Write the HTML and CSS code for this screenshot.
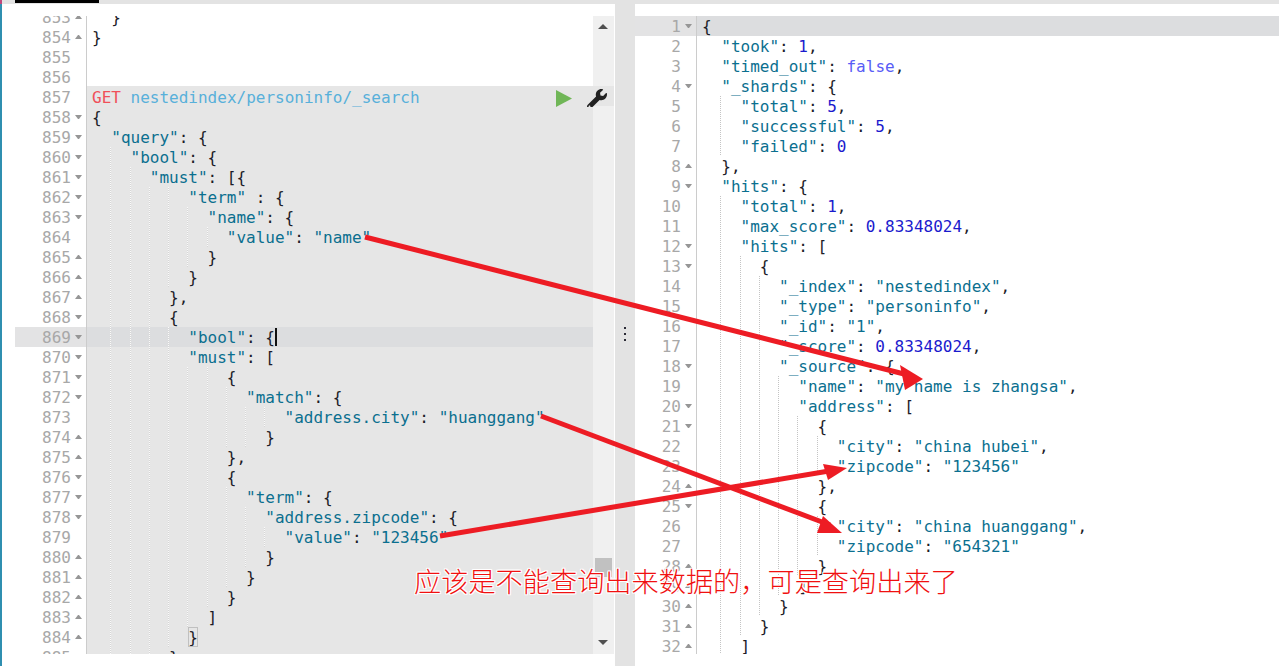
FILE: index.html
```html
<!DOCTYPE html>
<html lang="zh">
<head>
<meta charset="utf-8">
<title>Sense</title>
<link rel="stylesheet" href="styles.css">
</head>
<body>
<div class="rail"></div>
<div class="app">
  <div class="top"><div class="tab"></div></div>
  <div class="main">
    <section class="pane left">
      <div class="editor">
        <div class="lines">
          <div class="r"><span class="g">853<i class="f u"></i></span><span class="c"><i class="y"></i>}</span></div>
          <div class="r"><span class="g">854<i class="f u"></i></span><span class="c">}</span></div>
          <div class="r"><span class="g">855<i class="f"></i></span><span class="c"></span></div>
          <div class="r"><span class="g">856<i class="f"></i></span><span class="c"></span></div>
          <div class="r rq first"><span class="g">857<i class="f"></i></span><span class="c"><b class="m">GET</b> <b class="url">nestedindex/personinfo/_search</b></span>
            <svg class="play" viewBox="0 0 16 17"><path d="M0 0L16 8.5L0 17Z"/></svg>
            <svg class="wrench" viewBox="0 0 512 512"><path d="M507.73 109.1c-2.24-9.03-13.54-12.09-20.12-5.51l-74.36 74.36-67.88-11.31-11.31-67.88 74.36-74.36c6.62-6.62 3.43-17.9-5.66-20.16-47.38-11.74-99.55.91-136.58 37.93-39.64 39.64-50.55 97.1-34.05 147.2L18.74 402.76c-24.99 24.99-24.99 65.51 0 90.5 24.99 24.99 65.51 24.99 90.5 0l213.21-213.21c50.12 16.71 107.47 5.68 147.37-34.22 37.07-37.07 49.7-89.32 37.91-136.73zM64 472c-13.25 0-24-10.75-24-24 0-13.26 10.75-24 24-24s24 10.74 24 24c0 13.25-10.75 24-24 24z"/></svg>
          </div>
          <div class="r rq"><span class="g">858<i class="f d"></i></span><span class="c">{</span></div>
          <div class="r rq"><span class="g">859<i class="f d"></i></span><span class="c"><i class="y"></i><b class="s">"query"</b>: {</span></div>
          <div class="r rq"><span class="g">860<i class="f d"></i></span><span class="c"><i class="x"></i><i class="y"></i><b class="s">"bool"</b>: {</span></div>
          <div class="r rq"><span class="g">861<i class="f d"></i></span><span class="c"><i class="x"></i><i class="x"></i><i class="y"></i><b class="s">"must"</b>: [{</span></div>
          <div class="r rq"><span class="g">862<i class="f d"></i></span><span class="c"><i class="x"></i><i class="x"></i><i class="x"></i><i class="x"></i><i class="y"></i><b class="s">"term"</b> : {</span></div>
          <div class="r rq"><span class="g">863<i class="f d"></i></span><span class="c"><i class="x"></i><i class="x"></i><i class="x"></i><i class="x"></i><i class="x"></i><i class="y"></i><b class="s">"name"</b>: {</span></div>
          <div class="r rq"><span class="g">864<i class="f"></i></span><span class="c"><i class="x"></i><i class="x"></i><i class="x"></i><i class="x"></i><i class="x"></i><i class="x"></i><i class="y"></i><b class="s">"value"</b>: <b class="s">"name"</b></span></div>
          <div class="r rq"><span class="g">865<i class="f u"></i></span><span class="c"><i class="x"></i><i class="x"></i><i class="x"></i><i class="x"></i><i class="x"></i><i class="y"></i>}</span></div>
          <div class="r rq"><span class="g">866<i class="f u"></i></span><span class="c"><i class="x"></i><i class="x"></i><i class="x"></i><i class="x"></i><i class="y"></i>}</span></div>
          <div class="r rq"><span class="g">867<i class="f u"></i></span><span class="c"><i class="x"></i><i class="x"></i><i class="x"></i><i class="y"></i>},</span></div>
          <div class="r rq"><span class="g">868<i class="f d"></i></span><span class="c"><i class="x"></i><i class="x"></i><i class="x"></i><i class="y"></i>{</span></div>
          <div class="r rq cur"><span class="g">869<i class="f d"></i></span><span class="c"><i class="x"></i><i class="x"></i><i class="x"></i><i class="x"></i><i class="y"></i><b class="s">"bool"</b>: {<i class="caret"></i></span></div>
          <div class="r rq"><span class="g">870<i class="f d"></i></span><span class="c"><i class="x"></i><i class="x"></i><i class="x"></i><i class="x"></i><i class="y"></i><b class="s">"must"</b>: [</span></div>
          <div class="r rq"><span class="g">871<i class="f d"></i></span><span class="c"><i class="x"></i><i class="x"></i><i class="x"></i><i class="x"></i><i class="x"></i><i class="x"></i><i class="y"></i>{</span></div>
          <div class="r rq"><span class="g">872<i class="f d"></i></span><span class="c"><i class="x"></i><i class="x"></i><i class="x"></i><i class="x"></i><i class="x"></i><i class="x"></i><i class="x"></i><i class="y"></i><b class="s">"match"</b>: {</span></div>
          <div class="r rq"><span class="g">873<i class="f"></i></span><span class="c"><i class="x"></i><i class="x"></i><i class="x"></i><i class="x"></i><i class="x"></i><i class="x"></i><i class="x"></i><i class="x"></i><i class="x"></i><i class="y"></i><b class="s">"address.city"</b>: <b class="s">"huanggang"</b></span></div>
          <div class="r rq"><span class="g">874<i class="f u"></i></span><span class="c"><i class="x"></i><i class="x"></i><i class="x"></i><i class="x"></i><i class="x"></i><i class="x"></i><i class="x"></i><i class="x"></i><i class="y"></i>}</span></div>
          <div class="r rq"><span class="g">875<i class="f u"></i></span><span class="c"><i class="x"></i><i class="x"></i><i class="x"></i><i class="x"></i><i class="x"></i><i class="x"></i><i class="y"></i>},</span></div>
          <div class="r rq"><span class="g">876<i class="f d"></i></span><span class="c"><i class="x"></i><i class="x"></i><i class="x"></i><i class="x"></i><i class="x"></i><i class="x"></i><i class="y"></i>{</span></div>
          <div class="r rq"><span class="g">877<i class="f d"></i></span><span class="c"><i class="x"></i><i class="x"></i><i class="x"></i><i class="x"></i><i class="x"></i><i class="x"></i><i class="x"></i><i class="y"></i><b class="s">"term"</b>: {</span></div>
          <div class="r rq"><span class="g">878<i class="f d"></i></span><span class="c"><i class="x"></i><i class="x"></i><i class="x"></i><i class="x"></i><i class="x"></i><i class="x"></i><i class="x"></i><i class="x"></i><i class="y"></i><b class="s">"address.zipcode"</b>: {</span></div>
          <div class="r rq"><span class="g">879<i class="f"></i></span><span class="c"><i class="x"></i><i class="x"></i><i class="x"></i><i class="x"></i><i class="x"></i><i class="x"></i><i class="x"></i><i class="x"></i><i class="x"></i><i class="y"></i><b class="s">"value"</b>: <b class="s">"123456"</b></span></div>
          <div class="r rq"><span class="g">880<i class="f u"></i></span><span class="c"><i class="x"></i><i class="x"></i><i class="x"></i><i class="x"></i><i class="x"></i><i class="x"></i><i class="x"></i><i class="x"></i><i class="y"></i>}</span></div>
          <div class="r rq"><span class="g">881<i class="f u"></i></span><span class="c"><i class="x"></i><i class="x"></i><i class="x"></i><i class="x"></i><i class="x"></i><i class="x"></i><i class="x"></i><i class="y"></i>}</span></div>
          <div class="r rq"><span class="g">882<i class="f u"></i></span><span class="c"><i class="x"></i><i class="x"></i><i class="x"></i><i class="x"></i><i class="x"></i><i class="x"></i><i class="y"></i>}</span></div>
          <div class="r rq"><span class="g">883<i class="f u"></i></span><span class="c"><i class="x"></i><i class="x"></i><i class="x"></i><i class="x"></i><i class="x"></i><i class="y"></i>]</span></div>
          <div class="r rq"><span class="g">884<i class="f u"></i></span><span class="c"><i class="x"></i><i class="x"></i><i class="x"></i><i class="x"></i><i class="y"></i><span class="bm">}</span></span></div>
          <div class="r rq"><span class="g">885<i class="f u"></i></span><span class="c"><i class="x"></i><i class="x"></i><i class="x"></i><i class="y"></i>}</span></div>
        </div>
        <div class="sbar">
          <i class="arr up"></i>
          <i class="thumb"></i>
          <i class="arr down"></i>
        </div>
      </div>
    </section>
    <div class="split"><span class="dots"><i></i><i></i><i></i></span></div>
    <section class="pane right">
      <div class="editor out">
        <div class="lines">
          <div class="r cur"><span class="g">1<i class="f d"></i></span><span class="c">{</span></div>
          <div class="r"><span class="g">2<i class="f"></i></span><span class="c"><i class="y"></i><b class="s">"took"</b>: <b class="n">1</b>,</span></div>
          <div class="r"><span class="g">3<i class="f"></i></span><span class="c"><i class="y"></i><b class="s">"timed_out"</b>: <b class="bo">false</b>,</span></div>
          <div class="r"><span class="g">4<i class="f d"></i></span><span class="c"><i class="y"></i><b class="s">"_shards"</b>: {</span></div>
          <div class="r"><span class="g">5<i class="f"></i></span><span class="c"><i class="x"></i><i class="y"></i><b class="s">"total"</b>: <b class="n">5</b>,</span></div>
          <div class="r"><span class="g">6<i class="f"></i></span><span class="c"><i class="x"></i><i class="y"></i><b class="s">"successful"</b>: <b class="n">5</b>,</span></div>
          <div class="r"><span class="g">7<i class="f"></i></span><span class="c"><i class="x"></i><i class="y"></i><b class="s">"failed"</b>: <b class="n">0</b></span></div>
          <div class="r"><span class="g">8<i class="f u"></i></span><span class="c"><i class="y"></i>},</span></div>
          <div class="r"><span class="g">9<i class="f d"></i></span><span class="c"><i class="y"></i><b class="s">"hits"</b>: {</span></div>
          <div class="r"><span class="g">10<i class="f"></i></span><span class="c"><i class="x"></i><i class="y"></i><b class="s">"total"</b>: <b class="n">1</b>,</span></div>
          <div class="r"><span class="g">11<i class="f"></i></span><span class="c"><i class="x"></i><i class="y"></i><b class="s">"max_score"</b>: <b class="n">0.83348024</b>,</span></div>
          <div class="r"><span class="g">12<i class="f d"></i></span><span class="c"><i class="x"></i><i class="y"></i><b class="s">"hits"</b>: [</span></div>
          <div class="r"><span class="g">13<i class="f d"></i></span><span class="c"><i class="x"></i><i class="x"></i><i class="y"></i>{</span></div>
          <div class="r"><span class="g">14<i class="f"></i></span><span class="c"><i class="x"></i><i class="x"></i><i class="x"></i><i class="y"></i><b class="s">"_index"</b>: <b class="s">"nestedindex"</b>,</span></div>
          <div class="r"><span class="g">15<i class="f"></i></span><span class="c"><i class="x"></i><i class="x"></i><i class="x"></i><i class="y"></i><b class="s">"_type"</b>: <b class="s">"personinfo"</b>,</span></div>
          <div class="r"><span class="g">16<i class="f"></i></span><span class="c"><i class="x"></i><i class="x"></i><i class="x"></i><i class="y"></i><b class="s">"_id"</b>: <b class="s">"1"</b>,</span></div>
          <div class="r"><span class="g">17<i class="f"></i></span><span class="c"><i class="x"></i><i class="x"></i><i class="x"></i><i class="y"></i><b class="s">"_score"</b>: <b class="n">0.83348024</b>,</span></div>
          <div class="r"><span class="g">18<i class="f d"></i></span><span class="c"><i class="x"></i><i class="x"></i><i class="x"></i><i class="y"></i><b class="s">"_source"</b>: {</span></div>
          <div class="r"><span class="g">19<i class="f"></i></span><span class="c"><i class="x"></i><i class="x"></i><i class="x"></i><i class="x"></i><i class="y"></i><b class="s">"name"</b>: <b class="s">"my name is zhangsa"</b>,</span></div>
          <div class="r"><span class="g">20<i class="f d"></i></span><span class="c"><i class="x"></i><i class="x"></i><i class="x"></i><i class="x"></i><i class="y"></i><b class="s">"address"</b>: [</span></div>
          <div class="r"><span class="g">21<i class="f d"></i></span><span class="c"><i class="x"></i><i class="x"></i><i class="x"></i><i class="x"></i><i class="x"></i><i class="y"></i>{</span></div>
          <div class="r"><span class="g">22<i class="f"></i></span><span class="c"><i class="x"></i><i class="x"></i><i class="x"></i><i class="x"></i><i class="x"></i><i class="x"></i><i class="y"></i><b class="s">"city"</b>: <b class="s">"china hubei"</b>,</span></div>
          <div class="r"><span class="g">23<i class="f"></i></span><span class="c"><i class="x"></i><i class="x"></i><i class="x"></i><i class="x"></i><i class="x"></i><i class="x"></i><i class="y"></i><b class="s">"zipcode"</b>: <b class="s">"123456"</b></span></div>
          <div class="r"><span class="g">24<i class="f u"></i></span><span class="c"><i class="x"></i><i class="x"></i><i class="x"></i><i class="x"></i><i class="x"></i><i class="y"></i>},</span></div>
          <div class="r"><span class="g">25<i class="f d"></i></span><span class="c"><i class="x"></i><i class="x"></i><i class="x"></i><i class="x"></i><i class="x"></i><i class="y"></i>{</span></div>
          <div class="r"><span class="g">26<i class="f"></i></span><span class="c"><i class="x"></i><i class="x"></i><i class="x"></i><i class="x"></i><i class="x"></i><i class="x"></i><i class="y"></i><b class="s">"city"</b>: <b class="s">"china huanggang"</b>,</span></div>
          <div class="r"><span class="g">27<i class="f"></i></span><span class="c"><i class="x"></i><i class="x"></i><i class="x"></i><i class="x"></i><i class="x"></i><i class="x"></i><i class="y"></i><b class="s">"zipcode"</b>: <b class="s">"654321"</b></span></div>
          <div class="r"><span class="g">28<i class="f u"></i></span><span class="c"><i class="x"></i><i class="x"></i><i class="x"></i><i class="x"></i><i class="x"></i><i class="y"></i>}</span></div>
          <div class="r"><span class="g">29<i class="f u"></i></span><span class="c"><i class="x"></i><i class="x"></i><i class="x"></i><i class="x"></i><i class="y"></i>]</span></div>
          <div class="r"><span class="g">30<i class="f u"></i></span><span class="c"><i class="x"></i><i class="x"></i><i class="x"></i><i class="y"></i>}</span></div>
          <div class="r"><span class="g">31<i class="f u"></i></span><span class="c"><i class="x"></i><i class="x"></i><i class="y"></i>}</span></div>
          <div class="r"><span class="g">32<i class="f u"></i></span><span class="c"><i class="x"></i><i class="y"></i>]</span></div>
        </div>
      </div>
    </section>
  </div>
</div>
<svg class="marks" viewBox="0 0 1279 666">
  <path class="ln" d="M365 237L908 375"/>
  <path class="hd" d="M923 379L900 365L905 390Z"/>
  <path class="ln" d="M541 416L830 525"/>
  <path class="hd" d="M842 533L823 516L817 533Z"/>
  <path class="ln" d="M440 536L835 470"/>
  <path class="hd" d="M847 468L823 464L828 480Z"/>
</svg>
<p class="note">应该是不能查询出来数据的，可是查询出来了</p>
</body>
</html>
```
FILE: styles.css
```css
* { box-sizing: border-box; }
html, body { margin: 0; height: 100%; }
body {
  position: relative;
  display: flex;
  width: 1279px;
  height: 666px;
  overflow: hidden;
  background: #fff;
  font-family: "DejaVu Sans Mono", "Liberation Mono", monospace;
  font-size: 16px;
  color: #1c1c28;
}
.rail {
  flex: 0 0 2px;
  background: linear-gradient(#c0487c 0 4px, #2f8fb0 4px);
}
.app { flex: 1; display: flex; flex-direction: column; min-width: 0; }
.top { flex: 0 0 4px; background: #e3e3e3; padding-left: 13px; }
.tab { width: 84px; height: 3px; background: #000; }
.main { flex: 1; display: flex; min-height: 0; }
.pane { padding-top: 12px; background: #fff; }
.left { flex: 0 0 613px; padding-left: 13px; padding-right: 1px; }
.split {
  flex: 0 0 20px;
  background: #e3e3e3;
  display: flex;
  align-items: center;
  justify-content: center;
  padding-bottom: 3px;
}
.dots { display: flex; flex-direction: column; gap: 4px; }
.dots i { width: 2px; height: 2px; background: #2a2a35; }
.right { flex: 1; min-width: 0; }
.editor { position: relative; height: 638px; overflow: hidden; display: flex; }
.lines { position: relative; z-index: 1; flex: 1; min-width: 0; margin-top: -9px; }
.out .lines { margin-top: 0; }
.r { position: relative; display: flex; height: 20px; line-height: 22px; white-space: pre; }
.g {
  flex: 0 0 72px;
  display: flex;
  justify-content: flex-end;
  align-items: center;
  border-right: 1px solid #ccc;
  color: #a8a8a8;
  padding: 2px 4px 0 0;
}
.out .g { flex-basis: 62px; }
.f { flex: 0 0 7px; margin-left: 4px; height: 4px; margin-top: -2px; }
.f.d { border-left: 3.5px solid transparent; border-right: 3.5px solid transparent; border-top: 4px solid #969696; }
.f.u { border-left: 3.5px solid transparent; border-right: 3.5px solid transparent; border-bottom: 4px solid #969696; }
.c { flex: 1; padding-left: 5px; min-width: 0; }
b { font-weight: 400; }
.s { color: #0b6f8f; }
.n { color: #1a1acd; }
.bo { color: #585cf6; }
.m { color: #f0505a; }
.url { color: #58b0da; }
.x, .y { display: inline-block; width: 19.26px; height: 20px; vertical-align: top; }
.x { background: linear-gradient(#c4c4c4 50%, transparent 50%) right top / 1px 2px repeat-y; }
.rq .x { background-image: linear-gradient(#fafafa 50%, #d6d6d6 50%); }
.rq .c { background-color: #e6e6e6; }
.first { box-shadow: 72px -1px 0 #e6e6e6; }
.cur .g { background: #e3e3e4; }
.cur .c { background-color: #dcdddf; }
.caret { display: inline-block; width: 2px; height: 18px; margin-right: -2px; background: #111; vertical-align: top; margin-top: 1px; }
.bm { display: inline-block; height: 20px; outline: 1px solid #c0c0c0; outline-offset: -1px; vertical-align: top; }
.play { position: absolute; left: 541px; top: 3px; width: 16px; height: 17px; fill: #70b657; }
.wrench { position: absolute; left: 572px; top: 2px; width: 20px; height: 20px; fill: #222; }
.sbar {
  flex: 0 0 21px;
  background: #f0f0f0;
  position: relative;
}
.arr { position: absolute; left: 5px; border-left: 5px solid transparent; border-right: 5px solid transparent; }
.up { top: 8px; border-bottom: 5px solid #505050; }
.down { bottom: 9px; border-top: 5px solid #505050; }
.thumb { position: absolute; left: 2px; top: 542px; width: 17px; height: 19px; background: #c1c1c1; }
.marks { position: absolute; z-index: 2; left: 0; top: 0; width: 1279px; height: 666px; pointer-events: none; }
.ln { fill: none; stroke: #ed1c24; stroke-width: 5; }
.hd { fill: #ed1c24; }
.note {
  position: absolute;
  z-index: 3;
  left: 414px;
  top: 562px;
  margin: 0;
  font-family: "Noto Sans CJK SC", sans-serif;
  font-size: 27.2px;
  font-weight: 300;
  line-height: 36px;
  white-space: nowrap;
  color: #f01010;
  text-shadow: 1px 0 0 #fff, -1px 0 0 #fff, 0 1px 0 #fff, 0 -1px 0 #fff, 1px 1px 0 #fff, -1px -1px 0 #fff, 1px -1px 0 #fff, -1px 1px 0 #fff;
}
```
